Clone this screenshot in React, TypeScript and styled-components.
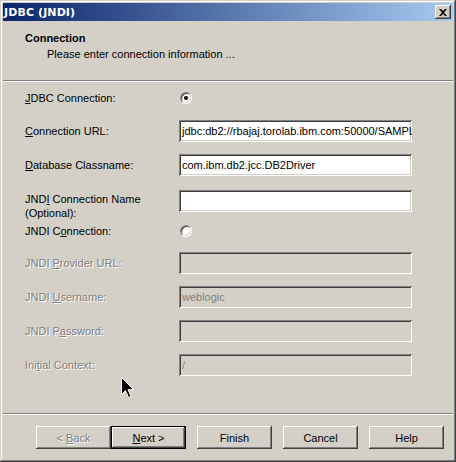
import React from 'react';
import styled, {createGlobalStyle} from 'styled-components';

const GlobalStyle = createGlobalStyle`
  html, body {
    margin: 0;
    padding: 0;
    background: #d4d0c8;
  }
  body {
    font-family: "Liberation Sans", Arial, sans-serif;
    font-size: 11px;
  }
`

type RowType = {
    label: React.ReactNode
    kind: 'radio' | 'field'
    value?: string
    checked?: boolean
    disabled?: boolean
    multi?: boolean
    h: number
}

const rows: RowType[] = [
    {label: <><u>J</u>DBC Connection:</>, kind: 'radio', checked: true, h: 32},
    {label: <><u>C</u>onnection URL:</>, kind: 'field', value: 'jdbc:db2://rbajaj.torolab.ibm.com:50000/SAMPLE', h: 34},
    {label: <><u>D</u>atabase Classname:</>, kind: 'field', value: 'com.ibm.db2.jcc.DB2Driver', h: 34},
    {label: <>JND<u>I</u> Connection Name<br/>(Optional):</>, kind: 'field', value: '', multi: true, h: 34},
    {label: <>JNDI C<u>o</u>nnection:</>, kind: 'radio', checked: false, h: 30},
    {label: <>JNDI <u>P</u>rovider URL:</>, kind: 'field', value: '', disabled: true, h: 34},
    {label: <>JNDI <u>U</u>sername:</>, kind: 'field', value: 'weblogic', disabled: true, h: 34},
    {label: <>JNDI P<u>a</u>ssword:</>, kind: 'field', value: '', disabled: true, h: 34},
    {label: <>Ini<u>t</u>ial Context:</>, kind: 'field', value: '/', disabled: true, h: 34},
]

const App = () => {
    return (
        <>
            <GlobalStyle/>
            <Window>
                <TitleBar>
                    <Title>JDBC (JNDI)</Title>
                    <CloseButton>
                        <svg width="8" height="7" viewBox="0 0 8 7">
                            <path d="M0 0h2l2 2 2-2h2L5 3.5 8 7H6L4 5 2 7H0l3-3.5z" fill="#000"/>
                        </svg>
                    </CloseButton>
                </TitleBar>
                <Header>
                    <HeaderTitle>Connection</HeaderTitle>
                    <HeaderText>Please enter connection information ...</HeaderText>
                </Header>
                <Separator/>
                <Form>
                    {rows.map((r, i) => (
                        <Row key={i} $h={r.h} $multi={r.multi}>
                            <Label $disabled={r.disabled} $multi={r.multi}>{r.label}</Label>
                            {r.kind === 'radio'
                                ? <Radio $checked={r.checked}/>
                                : <Field $disabled={r.disabled}>{r.value}</Field>}
                        </Row>
                    ))}
                </Form>
                <Spacer/>
                <Separator/>
                <ButtonBar>
                    <Pair>
                        <Button $disabled><span>&lt; <u>B</u>ack</span></Button>
                        <Button $default><span><u>N</u>ext &gt;</span></Button>
                    </Pair>
                    <Button>Finish</Button>
                    <Button>Cancel</Button>
                    <Button>Help</Button>
                </ButtonBar>
                <Cursor width="13" height="21" viewBox="0 0 13 21">
                    <path d="M0.5 0.5V17.5L4.5 13.5L7.5 20.5L10 19.5L7 12.5H12.5Z" fill="#000" stroke="#fff" strokeWidth="1"/>
                </Cursor>
            </Window>
        </>
    );
};

export default App;

const Window = styled.div`
  position: relative;
  width: 456px;
  height: 462px;
  box-sizing: border-box;
  padding: 3px;
  display: flex;
  flex-direction: column;
  background: #d4d0c8;
  box-shadow: inset -1px -1px #404040, inset 1px 1px #d4d0c8,
  inset -2px -2px #808080, inset 2px 2px #fff;
  overflow: hidden;
`

const TitleBar = styled.div`
  height: 18px;
  display: flex;
  align-items: center;
  justify-content: space-between;
  background: linear-gradient(to right, #0a246a, #a6caf0);
  padding: 0 2px 0 1px;
`

const Title = styled.div`
  color: #fff;
  font-family: "DejaVu Sans", Tahoma, sans-serif;
  font-weight: bold;
  font-size: 11px;
  letter-spacing: 0.1px;
`

const CloseButton = styled.div`
  width: 16px;
  height: 14px;
  box-sizing: border-box;
  display: flex;
  align-items: center;
  justify-content: center;
  background: #d4d0c8;
  box-shadow: inset -1px -1px #404040, inset 1px 1px #fff,
  inset -2px -2px #808080, inset 2px 2px #d4d0c8;
`

const Header = styled.div`
  height: 59px;
  box-sizing: border-box;
  padding: 10px 0 0 22px;
`

const HeaderTitle = styled.div`
  font-weight: bold;
  line-height: 14px;
  color: #000;
`

const HeaderText = styled.div`
  line-height: 14px;
  margin: 2px 0 0 22px;
  color: #000;
`

const Separator = styled.div`
  height: 1px;
  background: #808080;
  border-bottom: 1px solid #fff;
`

const Form = styled.div`
  display: flex;
  flex-direction: column;
  padding-left: 22px;
`

const Row = styled.div<{ $h: number, $multi?: boolean }>`
  height: ${props => props.$h}px;
  display: grid;
  grid-template-columns: 154px 233px;
  align-items: center;
`

const Label = styled.div<{ $disabled?: boolean, $multi?: boolean }>`
  line-height: 14px;
  color: ${props => props.$disabled ? '#808080' : '#000'};
  text-shadow: ${props => props.$disabled ? '1px 1px 0 #fff' : 'none'};
  align-self: ${props => props.$multi ? 'start' : 'center'};
  margin-top: ${props => props.$multi ? '10px' : '0'};
`

const Field = styled.div<{ $disabled?: boolean }>`
  height: 22px;
  box-sizing: border-box;
  padding: 0 3px;
  display: flex;
  align-items: center;
  white-space: nowrap;
  overflow: hidden;
  background: ${props => props.$disabled ? '#d4d0c8' : '#fff'};
  color: ${props => props.$disabled ? '#808080' : '#000'};
  box-shadow: inset 1px 1px #808080, inset -1px -1px #fff,
  inset 2px 2px #404040, inset -2px -2px #d4d0c8;
`

const Radio = styled.div<{ $checked?: boolean }>`
  position: relative;
  margin-left: 1px;
  width: 12px;
  height: 12px;
  box-sizing: border-box;
  border-radius: 50%;
  background: #fff;
  border: 1px solid;
  border-color: #808080 #fff #fff #808080;
  box-shadow: inset 1px 1px #404040, inset -1px -1px #d4d0c8;

  &::after {
    content: '';
    display: ${props => props.$checked ? 'block' : 'none'};
    position: absolute;
    left: 3px;
    top: 3px;
    width: 4px;
    height: 4px;
    border-radius: 50%;
    background: #000;
  }
`

const Spacer = styled.div`
  flex: 1;
`

const ButtonBar = styled.div`
  height: 44px;
  box-sizing: border-box;
  padding: 11px 9px 0 0;
  display: flex;
  justify-content: flex-end;
  align-items: flex-start;
  gap: 11px;
`

const Pair = styled.div`
  display: flex;
`

const Button = styled.div<{ $disabled?: boolean, $default?: boolean }>`
  width: 75px;
  height: 23px;
  box-sizing: border-box;
  display: flex;
  align-items: center;
  justify-content: center;
  background: #d4d0c8;
  color: ${props => props.$disabled ? '#808080' : '#000'};
  text-shadow: ${props => props.$disabled ? '1px 1px 0 #fff' : 'none'};
  border: ${props => props.$default ? '1px solid #000' : 'none'};
  box-shadow: inset -1px -1px #404040, inset 1px 1px #fff,
  inset -2px -2px #808080, inset 2px 2px #d4d0c8;
`

const Cursor = styled.svg`
  position: absolute;
  left: 121px;
  top: 377px;
`
